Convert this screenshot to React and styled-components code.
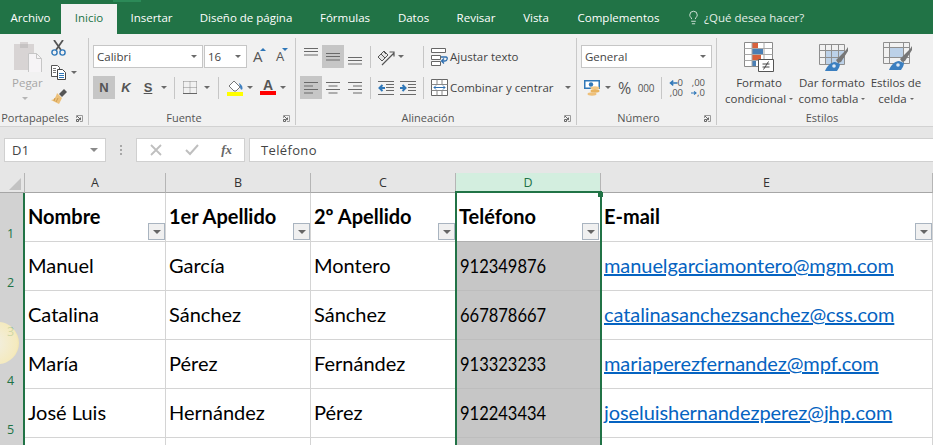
import React from 'react'
import styled, { createGlobalStyle } from 'styled-components'
import { Lightbulb } from 'lucide-react'

const GREEN = '#217346'

const GlobalStyle = createGlobalStyle`
  html, body { margin: 0; padding: 0; background: #fff; }
  body { width: 933px; height: 445px; overflow: hidden; font-family: "Open Sans", "Noto Sans", sans-serif; }
  * { box-sizing: border-box; }
`

/* ---------- icons ---------- */
const Paste = () => (
  <svg width="28" height="30" viewBox="0 0 28 30">
    <path d="M0 2h6V0h8v2h6v26H0z" fill="#d8d4d4" />
    <path d="M6 2h8v4H6z" fill="#c6c3c3" />
    <path d="M14.500 11.500h8l5 5v14h-13z" fill="#f6f4f6" stroke="#c6c6c6" />
    <path d="M22.500 11.500v5h5" fill="none" stroke="#c6c6c6" />
  </svg>
)
const Scissors = () => (
  <svg width="15" height="16" viewBox="0 0 15 16">
    <path d="M3 0l7 10M12 0L5 10" stroke="#555" strokeWidth="1.800" fill="none" />
    <circle cx="3.500" cy="12.500" r="2.600" fill="none" stroke="#2f77b8" strokeWidth="1.400" />
    <circle cx="11.500" cy="12.500" r="2.600" fill="none" stroke="#2f77b8" strokeWidth="1.400" />
  </svg>
)
const Copy = () => (
  <svg width="15" height="15" viewBox="0 0 15 15">
    <path d="M.5.500h6l2 2v9H.5z" fill="#fff" stroke="#555" />
    <path d="M6.500 4.500h5l3 3v7h-8z" fill="#fff" stroke="#444" />
    <path d="M2 3.500h3M2 5.500h3M2 7.500h3" stroke="#777" />
    <path d="M8 8.500h5M8 10.500h5M8 12.500h5" stroke="#2f77b8" />
  </svg>
)
const Brush = () => (
  <svg width="16" height="15" viewBox="0 0 16 15">
    <path d="M8 5l5-5 3 3-5 5z" fill="#555" />
    <path d="M6 4l5 5-3 6-8-4c3 0 5-3 6-7z" fill="#ecc07a" />
    <path d="M4 9l-1 3M7 9l-2 4" stroke="#cf9d50" />
  </svg>
)
const Borders = () => (
  <svg width="14" height="14" viewBox="0 0 14 14">
    <path d="M.5.500h13M.5 6.500h13M.5.500v12M7 .5v12M13.500.5v12" fill="none" stroke="#888" strokeDasharray="1 1" />
    <path d="M0 12.500h14" stroke="#666" />
  </svg>
)
const FillColor = () => (
  <svg width="16" height="16" viewBox="0 0 16 16">
    <path d="M2 6l5-5 6 6-4 4h-2z" fill="#fff" stroke="#777" />
    <path d="M12 3c2 1 3.500 3 3.500 5s-1 2-2 1z" fill="#3f7fbf" />
    <path d="M0 12h16v4H0z" fill="#ffff00" />
  </svg>
)
const VAlign = () => (
  <svg width="14" height="8" viewBox="0 0 14 8">
    <path d="M0 .5h14M0 3.500h14M0 7h14" stroke="#6a6a6a" />
  </svg>
)
const Lines = ({ align = 'left' }) => {
  const x = (w) => (align === 'left' ? 1 : align === 'center' ? (16 - w) / 2 : 15 - w)
  return (
    <svg width="16" height="14" viewBox="0 0 16 14">
      {[14, 9, 14, 9].map((w, i) => (
        <rect key={i} x={x(w)} y={i * 3.5 + 1} width={w} height="1" fill="#6a6a6a" />
      ))}
    </svg>
  )
}
const Orient = () => (
  <svg width="18" height="18" viewBox="0 0 18 18">
    <path d="M1 9l6-6 4 4-6 6z" fill="#e4e4e4" stroke="#555" />
    <path d="M4 6l4 4M6 3l3 3" stroke="#555" />
    <path d="M5 17L17 5M12.500 4h4.500v4.500" fill="none" stroke="#555" strokeWidth="1.200" />
  </svg>
)
const Indent = ({ rev }) => (
  <svg width="16" height="14" viewBox="0 0 16 14">
    <path d="M0 .5h16M0 13.500h16M8 3.500h8M8 6.500h8M8 9.500h8" stroke="#6a6a6a" />
    <path d={rev ? 'M2 7h5M4.500 4L1.500 7l3 3' : 'M0 7h5M2.500 4l3 3-3 3'} stroke="#2f77b8" strokeWidth="2" fill="none" />
  </svg>
)
const Wrap = () => (
  <svg width="17" height="18" viewBox="0 0 17 18">
    <path d="M.5.500h14v4H.5zM.5 7.500h9v4h-9zM.5 13.500h9v4h-9z" fill="#fff" stroke="#666" />
    <path d="M10 9h5c2 0 1.500 4-1 4h-3M13 10.500l-2.500 2.500 2.500 2.500" fill="none" stroke="#2f6fb0" strokeWidth="1.300" />
  </svg>
)
const Merge = () => (
  <svg width="17" height="17" viewBox="0 0 17 17">
    <path d="M.5.500h16v16H.5z" fill="#fff" stroke="#666" />
    <path d="M.5 5.500h16M.5 11.500h16M6 .5v5M11 .5v5M6 11.500v5M11 11.500v5" stroke="#888" />
    <path d="M3 8.500h11M5 6.500l-2 2 2 2M12 6.500l2 2-2 2" fill="none" stroke="#2f6fb0" />
  </svg>
)
const Accounting = () => (
  <svg width="16" height="16" viewBox="0 0 16 16">
    <path d="M0 0h16v9H0z" fill="#2f77b8" />
    <path d="M1.500 1.500h13v6h-13z" fill="#fff" />
    <circle cx="7" cy="4.500" r="2.200" fill="#2f77b8" />
    <ellipse cx="11" cy="8" rx="4.500" ry="1.700" fill="#f0c684" />
    <ellipse cx="11" cy="11" rx="4.500" ry="1.700" fill="#e8b35f" />
    <ellipse cx="8" cy="14" rx="4.500" ry="1.700" fill="#eec07a" />
  </svg>
)
const DecArrow = ({ right }) => (
  <svg width="9" height="8" viewBox="0 0 9 8">
    <path d={right ? 'M0 4h7M4.500 1.500L7.500 4l-3 2.500' : 'M9 4H2M4.500 1.500L1.500 4l3 2.500'} stroke="#2f77b8" strokeWidth="1.500" fill="none" />
  </svg>
)
const CondFormat = () => (
  <svg width="30" height="32" viewBox="0 0 30 32">
    <path d="M.5.500h28v24H.5z" fill="#fff" stroke="#8a8a8a" />
    <path d="M8 1h6v5H8z" fill="#d8613c" />
    <path d="M8 7h11v5H8z" fill="#4a7fb5" />
    <path d="M8 13h9v5H8z" fill="#d8613c" />
    <path d="M8 19h4v5H8z" fill="#4a7fb5" />
    <path d="M.5 6.500h28M.5 12.500h28M.5 18.500h28M8 .5v24M20 .5v24" stroke="#a8a8a8" fill="none" />
    <path d="M14.500 17.500h15v12h-15z" fill="#fff" stroke="#555" />
    <path d="M18.500 22h7M18.500 25h7M24.500 19.500l-5 8" stroke="#444" />
  </svg>
)
const BrushTip = ({ y = 0 }) => (
  <g transform={`translate(0 ${y})`}>
    <path d="M21 18L31 8l2-3v4l-7 11-3 1z" fill="#777" />
    <path d="M10 29c2-5 6-9 10-9l5 2c0 3-2 5-3 7z" fill="#3b7fc0" />
    <circle cx="19" cy="24" r="1.800" fill="#dfe9f4" />
  </g>
)
const TableFormat = () => (
  <svg width="34" height="32" viewBox="0 0 34 32">
    <path d="M10 8h19v15H10z" fill="#bcd1e8" />
    <path d="M4.500 2.500h25v20h-25zM4.500 8.500h25M4.500 15.500h25M10.500 2.500v20M16.500 2.500v20M23.500 2.500v20" fill="none" stroke="#8f8f8f" />
    <BrushTip />
  </svg>
)
const CellStyle = () => (
  <svg width="34" height="32" viewBox="0 0 34 32">
    <path d="M10 5h14v10H10z" fill="#bcd1e8" />
    <path d="M4.500 .5h26v21h-26zM4.500 5.500h26M4.500 15.500h26M10.500 .5v21M24.500 .5v21" fill="none" stroke="#8f8f8f" />
    <BrushTip y={-1} />
  </svg>
)
const Launcher = () => (
  <svg width="7" height="7" viewBox="0 0 7 7">
    <path d="M.5 3V.5h6v6H4" fill="none" stroke="#9a9a9a" />
    <path d="M1 1l3.500 3.500M4.500 2.500v2.200H2.300M.5 4.500h2v2h-2z" fill="none" stroke="#666" />
  </svg>
)
const Dismiss = () => (
  <svg width="12" height="12" viewBox="0 0 12 12">
    <path d="M1 1l10 10M11 1L1 11" stroke="#bfbfbf" strokeWidth="1.800" />
  </svg>
)
const Confirm = () => (
  <svg width="14" height="12" viewBox="0 0 14 12">
    <path d="M1 6l4 4 8-9" fill="none" stroke="#bfbfbf" strokeWidth="2" />
  </svg>
)
const Caret = styled.span`
  display: inline-block;
  flex: none;
  width: 0;
  height: 0;
  border-left: ${(p) => p.$size || 3}px solid transparent;
  border-right: ${(p) => p.$size || 3}px solid transparent;
  border-top: ${(p) => p.$size || 3}px solid ${(p) => p.$color || '#6a6a6a'};
  margin-left: ${(p) => p.$gap || 0}px;
`

/* ---------- title tabs ---------- */
const TabBar = styled.nav`
  position: relative;
  height: 34px;
  background: ${GREEN};
  display: flex;
  align-items: flex-end;
  font-size: 11.5px;
  color: #fff;
`
const TopMark = styled.span`
  position: absolute;
  left: 113px;
  top: 0;
  width: 28px;
  height: 2px;
  background: #2c8a58;
`
const Tab = styled.div`
  width: ${(p) => p.$w}px;
  height: 30px;
  padding-bottom: 4px;
  display: flex;
  align-items: center;
  justify-content: center;
  background: ${(p) => (p.$active ? '#f1f1f1' : 'transparent')};
  color: ${(p) => (p.$active ? GREEN : '#fff')};
`
const TellMe = styled.div`
  height: 30px;
  padding: 0 0 4px 12px;
  display: flex;
  align-items: center;
  gap: 3px;
  color: #e4eee8;
`

/* ---------- ribbon ---------- */
const Ribbon = styled.div`
  height: 93px;
  background: #f1f1f1;
  border-bottom: 1px solid #d2d2d2;
  display: flex;
  font-size: 11.5px;
  color: #444;
`
const Group = styled.section`
  width: ${(p) => p.$w}px;
  margin: 4px 0 1px;
  border-right: ${(p) => (p.$last ? '0' : '1px solid #c9c9c9')};
  display: flex;
  flex-direction: column;
`
const GroupBody = styled.div`
  flex: 1;
  display: flex;
  padding-left: ${(p) => p.$pad || 0}px;
`
const GroupLabel = styled.div`
  height: 15px;
  display: flex;
  align-items: center;
  justify-content: center;
  color: #555;
  font-size: 11px;
  position: relative;
  padding-right: ${(p) => p.$shift ?? 16}px;
`
const LauncherSlot = styled.span`
  position: absolute;
  right: 5px;
  top: 5px;
  display: flex;
`
const PasteBtn = styled.div`
  width: 46px;
  padding: 4px 0 0 14px;
  color: #a6a6a6;
  display: flex;
  flex-direction: column;
  svg { display: block; }
`
const PasteLabel = styled.div`
  margin: 3px 0 6px -2px;
  line-height: 16px;
`
const PasteCaret = styled(Caret)`
  margin-left: 8px;
`
const ClipStack = styled.div`
  display: flex;
  flex-direction: column;
  padding: 2px 0 0 5px;
  gap: 8px;
`
const ClipRow = styled.div`
  display: flex;
  align-items: center;
  height: 16px;
`
const Rows = styled.div`
  display: flex;
  flex-direction: column;
  padding-top: 7px;
  gap: 8px;
`
const ToolRow = styled.div`
  display: flex;
  align-items: center;
  height: 23px;
`
const Combo = styled.div`
  width: ${(p) => p.$w}px;
  height: 23px;
  margin-right: ${(p) => p.$mr || 0}px;
  background: #fff;
  border: 1px solid #c6c6c6;
  display: flex;
  align-items: center;
  justify-content: space-between;
  padding: 0 5px 0 3px;
  color: #444;
`
const ToolBtn = styled.div`
  width: ${(p) => p.$w || 22}px;
  height: 23px;
  margin-left: ${(p) => p.$ml || 0}px;
  flex: none;
  display: flex;
  align-items: center;
  justify-content: center;
  background: ${(p) => (p.$on ? '#c6c6c6' : 'transparent')};
  font-family: "Liberation Sans", sans-serif;
  font-size: 13px;
  font-weight: 700;
  font-style: ${(p) => (p.$italic ? 'italic' : 'normal')};
  text-decoration: ${(p) => (p.$under ? 'underline' : 'none')};
  color: #555;
`
const SizeBtn = styled.div`
  position: relative;
  width: ${(p) => p.$w}px;
  margin-left: ${(p) => p.$ml || 0}px;
  height: 23px;
  flex: none;
  font-size: ${(p) => (p.$small ? 13 : 15)}px;
  line-height: 23px;
  color: #555;
`
const SizeMark = styled.span`
  position: absolute;
  left: ${(p) => p.$left}px;
  top: 3px;
  width: 0;
  height: 0;
  border-left: 3px solid transparent;
  border-right: 3px solid transparent;
  ${(p) => (p.$down ? 'border-top: 3px solid #2f77b8;' : 'border-bottom: 3px solid #2f77b8;')}
`
const ColorBtn = styled.div`
  width: 16px;
  height: 23px;
  margin-left: ${(p) => p.$ml || 0}px;
  flex: none;
  padding-top: 3px;
  display: flex;
  flex-direction: column;
  align-items: center;
  font-family: "Liberation Sans", sans-serif;
  font-size: 14px;
  font-weight: 700;
  line-height: 12px;
  color: #555;
  &::after {
    content: '';
    display: block;
    width: 16px;
    height: 4px;
    background: ${(p) => p.$bar};
  }
`
const Sep = styled.span`
  flex: none;
  width: 1px;
  height: 22px;
  background: #c6c6c6;
  margin: 0 ${(p) => p.$r ?? 4}px 0 ${(p) => p.$l ?? 4}px;
`
const WideBtn = styled.div`
  display: flex;
  align-items: center;
  gap: 2px;
  height: 23px;
  white-space: nowrap;
`
const AlignCell = styled.div`
  width: ${(p) => p.$w || 22}px;
  height: 23px;
  display: flex;
  justify-content: center;
  align-items: ${(p) => p.$v || 'center'};
  padding: ${(p) => p.$pad || '0'};
  background: ${(p) => (p.$on ? '#c6c6c6' : 'transparent')};
  flex: none;
`
const DecBtn = styled.div`
  width: 22px;
  height: 23px;
  flex: none;
  display: flex;
  flex-direction: column;
  align-items: center;
  justify-content: center;
  font-size: 9.5px;
  line-height: 10px;
  color: #555;
`
const DecLine = styled.div`
  width: 14px;
  display: flex;
  align-items: center;
  justify-content: flex-end;
`
const BigGroup = styled.div`
  display: flex;
  padding-top: 4px;
`
const BigBtn = styled.div`
  width: ${(p) => p.$w}px;
  display: flex;
  flex-direction: column;
  align-items: center;
  text-align: center;
  line-height: 16px;
  white-space: nowrap;
  svg { display: block; margin-bottom: 1px; }
`
const BigLine = styled.div`
  display: flex;
  align-items: center;
  justify-content: center;
  gap: 3px;
`
const Thousand = styled.span`
  font-family: "Open Sans", sans-serif;
  font-size: 10px;
  font-weight: 400;
  letter-spacing: -.2px;
`
const Percent = styled.span`
  font-family: "Open Sans", sans-serif;
  font-size: 16px;
  font-weight: 400;
`

/* ---------- formula bar ---------- */
const FormulaBar = styled.div`
  height: 46px;
  background: #e6e6e6;
  display: flex;
  padding: 11px 0 11px 4px;
  font-size: 13px;
  letter-spacing: .35px;
  color: #444;
`
const FieldBox = styled.div`
  background: #fff;
  border: 1px solid #d0d0d0;
  height: 24px;
  display: flex;
  align-items: center;
`
const NameBox = styled(FieldBox)`
  width: 102px;
  justify-content: space-between;
  padding: 0 7px;
`
const Grip = styled.div`
  width: 30px;
  display: flex;
  flex-direction: column;
  align-items: center;
  justify-content: center;
  gap: 2px;
  span { width: 2px; height: 2px; background: #a8a8a8; }
`
const FxBox = styled(FieldBox)`
  width: 109px;
  justify-content: space-between;
  padding: 0 12px 0 13px;
  margin-right: 4px;
`
const Fx = styled.i`
  font-family: "Liberation Serif", serif;
  font-weight: 700;
  color: #666;
  font-size: 13px;
  letter-spacing: 0;
`
const ContentBox = styled(FieldBox)`
  flex: 1;
  padding-left: 11px;
  border-right: 0;
`

/* ---------- sheet ---------- */
const Sheet = styled.div`
  position: relative;
  height: 272px;
  overflow: hidden;
  display: grid;
  grid-template-columns: 25px 141px 145px 145px 145px 332px;
  grid-template-rows: 20px 49px 49px 49px 49px 49px 49px;
  font-family: Lato, "Open Sans", sans-serif;
  font-size: 20px;
  color: #000;
`
const Corner = styled.div`
  background: #e6e6e6;
  border-bottom: 1px solid #a6a6a6;
  border-right: 1px solid #b5b5b5;
  display: flex;
  align-items: flex-end;
  justify-content: flex-end;
  padding: 0 3px 2px 0;
`
const ColHead = styled.div`
  background: ${(p) => (p.$on ? '#d3eedf' : '#e6e6e6')};
  border-right: 1px solid #b5b5b5;
  border-bottom: ${(p) => (p.$on ? `2px solid ${GREEN}` : '1px solid #a6a6a6')};
  color: ${(p) => (p.$on ? GREEN : '#333')};
  font-family: "Open Sans", sans-serif;
  font-size: 12.5px;
  display: flex;
  align-items: center;
  justify-content: center;
`
const RowHead = styled.div`
  background: #d2d2d2;
  border-right: 2px solid ${GREEN};
  color: ${GREEN};
  font-family: "Open Sans", sans-serif;
  font-size: 12.5px;
  display: flex;
  align-items: flex-end;
  justify-content: center;
  padding: 0 2px 1px 0;
  line-height: 15px;
`
const Cell = styled.div`
  position: relative;
  background: ${(p) => (p.$grey ? '#c6c6c6' : '#fff')};
  border-right: 1px solid #d4d4d4;
  border-bottom: 1px solid ${(p) => (p.$grey ? '#bdbdbd' : p.$line ? '#b0b0b0' : '#d4d4d4')};
  font-weight: ${(p) => (p.$head ? 700 : 400)};
  display: flex;
  align-items: center;
  padding: 0 0 2px 3px;
  white-space: nowrap;
`
/* Lato's figures are wider than the sheet font's, so they are narrowed to fit */
const Phone = styled.span`
  display: inline-block;
  transform: scaleX(.825);
  transform-origin: left center;
  margin-left: 1px;
`
const Mail = styled.a`
  color: #0563c1;
  text-decoration: underline;
  letter-spacing: -.08px;
`
const FilterBtn = styled.span`
  position: absolute;
  right: ${(p) => (p.$inset ? 1 : 0)}px;
  bottom: 1px;
  width: 17px;
  height: 17px;
  background: #f0f0f0;
  border: 1px solid #a9b4c0;
  display: flex;
  align-items: center;
  justify-content: center;
`
const Selection = styled.div`
  position: absolute;
  left: 455px;
  top: 18px;
  width: 147px;
  height: 260px;
  border: 2px solid ${GREEN};
  pointer-events: none;
`
const Handle = styled.span`
  position: absolute;
  right: -3px;
  top: -1px;
  width: 5px;
  height: 5px;
  background: ${GREEN};
`
const Pointer = styled.div`
  position: absolute;
  left: -23px;
  top: 149px;
  width: 42px;
  height: 42px;
  border-radius: 50%;
  background: radial-gradient(circle at 40% 50%, rgba(255, 252, 235, .7) 0%, rgba(253, 240, 185, .8) 70%, rgba(238, 215, 120, .9) 100%);
`

const columns = ['A', 'B', 'C', 'D', 'E']
const header = ['Nombre', '1er Apellido', '2º Apellido', 'Teléfono', 'E-mail']
const people = [
  ['Manuel', 'García', 'Montero', '912349876', 'manuelgarciamontero@mgm.com'],
  ['Catalina', 'Sánchez', 'Sánchez', '667878667', 'catalinasanchezsanchez@css.com'],
  ['María', 'Pérez', 'Fernández', '913323233', 'mariaperezfernandez@mpf.com'],
  ['José Luis', 'Hernández', 'Pérez', '912243434', 'joseluishernandezperez@jhp.com'],
]
const emptyRow = ['', '', '', '', '']
const tabs = [
  ['Archivo', 61], ['Inicio', 56], ['Insertar', 69], ['Diseño de página', 120],
  ['Fórmulas', 78], ['Datos', 59], ['Revisar', 66], ['Vista', 54], ['Complementos', 111],
]

function renderValue(value, col) {
  if (col === 3 && value) return <Phone>{value}</Phone>
  if (col === 4 && value) return <Mail>{value}</Mail>
  return value
}

export default function App() {
  return (
    <>
      <GlobalStyle />
      <TabBar>
        <TopMark />
        {tabs.map(([name, w]) => (
          <Tab key={name} $w={w} $active={name === 'Inicio'}>{name}</Tab>
        ))}
        <TellMe>
          <Lightbulb size={15} strokeWidth={1.4} />
          ¿Qué desea hacer?
        </TellMe>
      </TabBar>

      <Ribbon>
        <Group $w={89}>
          <GroupBody>
            <PasteBtn>
              <Paste />
              <PasteLabel>Pegar</PasteLabel>
              <PasteCaret $color="#b5b5b5" />
            </PasteBtn>
            <ClipStack>
              <ClipRow><Scissors /></ClipRow>
              <ClipRow><Copy /><Caret $gap={5} /></ClipRow>
              <ClipRow><Brush /></ClipRow>
            </ClipStack>
          </GroupBody>
          <GroupLabel $shift={18}>Portapapeles<LauncherSlot><Launcher /></LauncherSlot></GroupLabel>
        </Group>

        <Group $w={207}>
          <GroupBody $pad={4}>
            <Rows>
              <ToolRow>
                <Combo $w={110} $mr={1}>Calibri<Caret /></Combo>
                <Combo $w={43}>16<Caret /></Combo>
                <SizeBtn $w={23} $ml={6}>A<SizeMark $left={7} /></SizeBtn>
                <SizeBtn $w={15} $small>A<SizeMark $left={6} $down /></SizeBtn>
              </ToolRow>
              <ToolRow>
                <ToolBtn $on>N</ToolBtn>
                <ToolBtn $italic>K</ToolBtn>
                <ToolBtn $under>S</ToolBtn>
                <Caret $gap={2} />
                <Sep $l={7} $r={7} />
                <ToolBtn $w={16}><Borders /></ToolBtn>
                <Caret $gap={6} />
                <Sep $l={8} $r={8} />
                <ToolBtn $w={16}><FillColor /></ToolBtn>
                <Caret $gap={4} />
                <ColorBtn $ml={7} $bar="#ff0000">A</ColorBtn>
                <Caret $gap={4} />
              </ToolRow>
            </Rows>
          </GroupBody>
          <GroupLabel>Fuente<LauncherSlot><Launcher /></LauncherSlot></GroupLabel>
        </Group>

        <Group $w={281}>
          <GroupBody $pad={4}>
            <Rows>
              <ToolRow>
                <AlignCell $v="flex-start" $pad="3px 0 0"><VAlign /></AlignCell>
                <AlignCell $on><VAlign /></AlignCell>
                <AlignCell $v="flex-end" $pad="0 0 3px"><VAlign /></AlignCell>
                <Sep />
                <AlignCell><Orient /></AlignCell>
                <Caret $gap={1} />
                <Sep $l={19} $r={7} />
                <WideBtn><Wrap />Ajustar texto</WideBtn>
              </ToolRow>
              <ToolRow>
                <AlignCell $on><Lines align="left" /></AlignCell>
                <AlignCell><Lines align="center" /></AlignCell>
                <AlignCell><Lines align="right" /></AlignCell>
                <Sep />
                <AlignCell><Indent rev /></AlignCell>
                <AlignCell><Indent /></AlignCell>
                <Sep $r={7} />
                <WideBtn><Merge />Combinar y centrar<Caret $gap={9} /></WideBtn>
              </ToolRow>
            </Rows>
          </GroupBody>
          <GroupLabel>Alineación<LauncherSlot><Launcher /></LauncherSlot></GroupLabel>
        </Group>

        <Group $w={140}>
          <GroupBody $pad={4}>
            <Rows>
              <ToolRow>
                <Combo $w={131}>General<Caret /></Combo>
              </ToolRow>
              <ToolRow>
                <AlignCell $w={22}><Accounting /></AlignCell>
                <Caret $gap={2} />
                <ToolBtn $w={27}><Percent>%</Percent></ToolBtn>
                <ToolBtn $w={16}><Thousand>000</Thousand></ToolBtn>
                <Sep $l={7} $r={3} />
                <DecBtn>
                  <DecLine><DecArrow />0</DecLine>
                  <DecLine>,00</DecLine>
                </DecBtn>
                <DecBtn>
                  <DecLine>,00</DecLine>
                  <DecLine><DecArrow right />,0</DecLine>
                </DecBtn>
              </ToolRow>
            </Rows>
          </GroupBody>
          <GroupLabel>Número<LauncherSlot><Launcher /></LauncherSlot></GroupLabel>
        </Group>

        <Group $w={216} $last>
          <GroupBody $pad={5}>
            <BigGroup>
              <BigBtn $w={74}><CondFormat /><div>Formato</div><BigLine>condicional<Caret $size={2} /></BigLine></BigBtn>
              <BigBtn $w={72}><TableFormat /><div>Dar formato</div><BigLine>como tabla<Caret $size={2} /></BigLine></BigBtn>
              <BigBtn $w={56}><CellStyle /><div>Estilos de</div><BigLine>celda<Caret $size={2} /></BigLine></BigBtn>
            </BigGroup>
          </GroupBody>
          <GroupLabel $shift={6}>Estilos</GroupLabel>
        </Group>
      </Ribbon>

      <FormulaBar>
        <NameBox>D1<Caret $size={4} $color="#8a8a8a" /></NameBox>
        <Grip><span /><span /><span /></Grip>
        <FxBox><Dismiss /><Confirm /><Fx>fx</Fx></FxBox>
        <ContentBox>Teléfono</ContentBox>
      </FormulaBar>

      <Sheet>
        <Corner>
          <svg width="12" height="12" viewBox="0 0 12 12"><path d="M12 0v12H0z" fill="#c2c2c2" /></svg>
        </Corner>
        {columns.map((c) => <ColHead key={c} $on={c === 'D'}>{c}</ColHead>)}

        <RowHead>1</RowHead>
        {header.map((h, j) => (
          <Cell key={h} $head $line={j === 3}>
            {h}
            <FilterBtn $inset={j === 3}><Caret $size={4} $color="#666" /></FilterBtn>
          </Cell>
        ))}

        {people.map((p, i) => (
          <React.Fragment key={i}>
            <RowHead>{i + 2}</RowHead>
            {p.map((v, j) => (
              <Cell key={j} $grey={j === 3}>{renderValue(v, j)}</Cell>
            ))}
          </React.Fragment>
        ))}
        <RowHead />
        {emptyRow.map((v, j) => (
          <Cell key={j} $grey={j === 3}>{v}</Cell>
        ))}
        <Selection><Handle /></Selection>
        <Pointer />
      </Sheet>
    </>
  )
}
